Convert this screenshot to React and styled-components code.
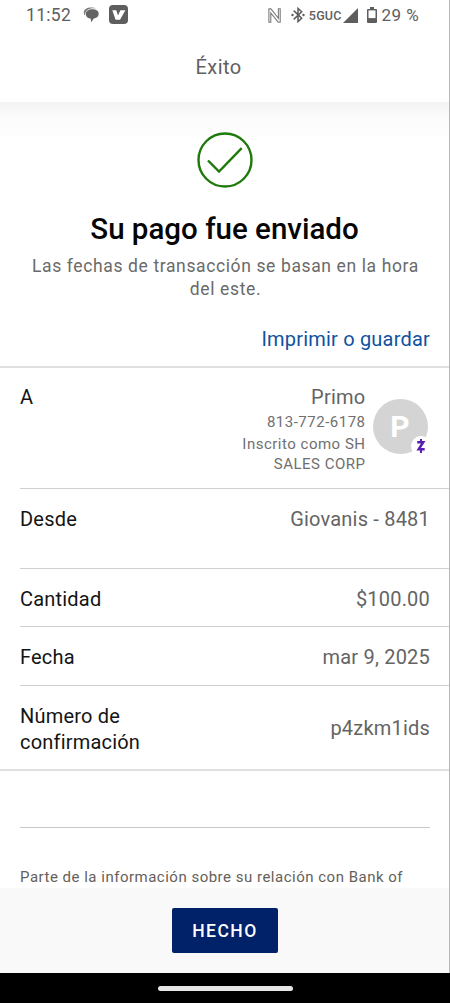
import React from "react";
import styled, { createGlobalStyle } from "styled-components";

const GlobalStyle = createGlobalStyle`
  * {
    box-sizing: border-box;
  }

  body {
    margin: 0;
    background-color: #fff;
    font-family: Roboto, "Liberation Sans", sans-serif;
  }
`;

const rows = [
  { id: "from", label: "Desde", value: "Giovanis - 8481", height: 80 },
  { id: "amount", label: "Cantidad", value: "$100.00", height: 58 },
  { id: "date", label: "Fecha", value: "mar 9, 2025", height: 59 },
];

const ChatIcon = () => (
  <svg width="17" height="16" viewBox="0 0 17 16">
    <path
      d="M9.500 2.300c3.700 0 6.200 1.600 6.200 4.500 0 2.700-1.900 4.500-4.900 4.700L8.300 15.200 7.600 11.600C5 11.300 2.800 9.600 2.800 7.200c0-3.300 2.900-4.900 6.700-4.900z"
      fill="#646464"
    />
    <path d="M2 8.400C.2 6.500.3 3.300 2.800 1.900 5.300.2 10.500.1 13 1.400 8 .9 1.900 2.300 2 8.400z" fill="#7a7a7a" />
  </svg>
);

const VenmoIcon = () => (
  <svg width="19" height="19" viewBox="0 0 19 19">
    <rect width="19" height="19" rx="4" fill="#5e5e5e" />
    <path d="M3.300 5.200h4l1.700 5.200 2.400-5.200h5L11 14.800H6.600z" fill="#fff" />
  </svg>
);

const NfcIcon = () => (
  <svg width="13" height="15" viewBox="0 0 13 15" fill="none" stroke="#7c7c7c" strokeWidth="1.100">
    <path d="M2.800 14.300H.9V.9h2l7.500 9.400V.7h1.800v13.500h-2L2.800 5z" />
  </svg>
);

const BluetoothIcon = () => (
  <svg width="14" height="16" viewBox="0 0 14 16">
    <path
      d="M2.700 3.600l8 7.700L7 14.600V1.400l3.700 3.300-8 7.700"
      fill="none"
      stroke="#5e5e5e"
      strokeWidth="1.500"
    />
    <circle cx="1.500" cy="8" r="1.200" fill="#5e5e5e" />
    <circle cx="12.500" cy="8" r="1.200" fill="#5e5e5e" />
  </svg>
);

const SignalIcon = () => (
  <svg width="15" height="15" viewBox="0 0 15 15">
    <path d="M15 0v15H0z" fill="#5e5e5e" />
  </svg>
);

const BatteryIcon = () => (
  <svg width="10" height="16" viewBox="0 0 10 16">
    <path d="M3 0h4v2h2a1 1 0 0 1 1 1v12a1 1 0 0 1-1 1H1a1 1 0 0 1-1-1V3a1 1 0 0 1 1-1h2z" fill="#5e5e5e" />
    <path d="M1.500 3.400h7v7.700h-7z" fill="#fff" />
  </svg>
);

const CheckIcon = () => (
  <svg width="56" height="56" viewBox="0 0 56 56" fill="none" stroke="#1f7a0c" strokeWidth="2.400">
    <circle cx="28" cy="28" r="26.500" />
    <path d="M11 28.500l11 11L44.700 16.200" />
  </svg>
);

const ZelleIcon = () => (
  <svg width="10" height="16" viewBox="0 0 10 16" fill="none" stroke="#5a1fb0">
    <path d="M1.200 4.300h6L2.700 11.300h6" strokeWidth="2.500" />
    <path d="M5 1v3M5 12v3" strokeWidth="2.100" />
  </svg>
);

const App = () => (
  <Screen>
    <GlobalStyle />
    <Content>
      <StatusBar>
        <Clock>11:52</Clock>
        <ChatIcon />
        <VenmoIcon />
        <StatusRight>
          <NfcIcon />
          <BluetoothIcon />
          <Network>5GUC</Network>
          <SignalIcon />
          <BatteryIcon />
          <Battery>29 %</Battery>
        </StatusRight>
      </StatusBar>
      <Header>Éxito</Header>

      <Hero>
        <CheckIcon />
        <Title>Su pago fue enviado</Title>
        <Subtitle>
          Las fechas de transacción se basan en la hora
          <br />
          del este.
        </Subtitle>
      </Hero>
      <PrintLink href="#">Imprimir o guardar</PrintLink>

      <Details>
        <RecipientRow>
          <Label>A</Label>
          <Recipient>
            <Name>Primo</Name>
            <Phone>813-772-6178</Phone>
            <Small>Inscrito como SH</Small>
            <Small>SALES CORP</Small>
          </Recipient>
          <Avatar>
            P
            <Badge>
              <ZelleIcon />
            </Badge>
          </Avatar>
        </RecipientRow>
        {rows.map((row) => (
          <Row key={row.id} $height={row.height}>
            <Label>{row.label}</Label>
            <Value>{row.value}</Value>
          </Row>
        ))}
        <Row $height={83} $last>
          <Label>
            Número de
            <br />
            confirmación
          </Label>
          <Value $middle>p4zkm1ids</Value>
        </Row>
      </Details>

      <Disclosure>Parte de la información sobre su relación con Bank of</Disclosure>
      <Footer>
        <DoneButton>HECHO</DoneButton>
      </Footer>
    </Content>
    <NavBar>
      <Handle />
    </NavBar>
  </Screen>
);

const Screen = styled.div`
  width: 450px;
  height: 1003px;
  display: flex;
  flex-direction: column;
  overflow: hidden;
  white-space: nowrap;
`;

const Content = styled.main`
  height: 973px;
  display: flex;
  flex-direction: column;
  border-right: 1px solid #b9b9b9;
`;

const StatusBar = styled.div`
  height: 31px;
  padding: 0 30px 1px 26px;
  display: flex;
  align-items: center;
  color: #5e5e5e;

  > svg:nth-of-type(1) {
    margin-left: 12px;
  }

  > svg:nth-of-type(2) {
    margin: -1px 0 0 9px;
  }
`;

const Clock = styled.span`
  width: 45px;
  font-size: 17.5px;
  letter-spacing: 0.3px;
`;

const StatusRight = styled.div`
  margin-left: auto;
  display: flex;
  align-items: center;

  > svg:nth-of-type(2) {
    margin-left: 10px;
  }

  > svg:nth-of-type(4) {
    margin: -1px 0 0 9px;
  }
`;

const Network = styled.span`
  margin: 1px 1px 0 4px;
  font-size: 12.5px;
  font-weight: 500;
  letter-spacing: 0.2px;
`;

const Battery = styled.span`
  margin-left: 5px;
  font-size: 17px;
  letter-spacing: 0.4px;
`;

const Header = styled.header`
  height: 71px;
  padding-right: 12px;
  display: flex;
  justify-content: center;
  align-items: center;
  color: #616161;
  font-size: 20px;
  letter-spacing: 0.4px;
`;

const Hero = styled.section`
  height: 212px;
  padding-top: 30px;
  display: flex;
  flex-direction: column;
  align-items: center;
  background: linear-gradient(#f3f3f3, #fcfcfc 18px, #fff 42px);

  > svg {
    flex-shrink: 0;
  }
`;

const Title = styled.h1`
  margin: 24px 0 0;
  color: #050505;
  font-size: 29.5px;
  font-weight: 500;
  line-height: 34px;
`;

const Subtitle = styled.p`
  margin: 9px 0 0;
  padding-left: 2px;
  color: #6a6a6a;
  font-size: 17.5px;
  line-height: 23px;
  letter-spacing: 0.62px;
  text-align: center;
`;

const PrintLink = styled.a`
  height: 52px;
  padding: 13px 19px 0 0;
  color: #10529f;
  font-size: 20px;
  line-height: 24px;
  letter-spacing: 0.2px;
  text-align: right;
  text-decoration: none;
`;

const Details = styled.section`
  border-top: 2px solid #e0e0e0;
  border-bottom: 2px solid #e0e0e0;
`;

const Row = styled.div`
  height: ${(props) => props.$height}px;
  margin-left: 20px;
  padding: 17px 19px 0 0;
  display: flex;
  justify-content: space-between;
  border-bottom: ${(props) => (props.$last ? "none" : "1px solid #cfcfcf")};
`;

const RecipientRow = styled(Row)`
  height: 121px;
  padding-top: 16px;
  padding-right: 21.5px;
`;

const Label = styled.div`
  color: #141414;
  font-size: 20px;
  line-height: 26px;
  letter-spacing: 0.2px;
`;

const Value = styled.div`
  margin-top: ${(props) => (props.$middle ? 12 : 0)}px;
  color: #646464;
  font-size: 20px;
  line-height: 26px;
  letter-spacing: 0.2px;
`;

const Recipient = styled.div`
  margin: 0 7px 0 auto;
  display: flex;
  flex-direction: column;
  align-items: flex-end;
`;

const Name = styled(Value)`
  letter-spacing: 0.25px;
`;

const Small = styled.div`
  color: #707070;
  font-size: 15px;
  line-height: 20px;
  letter-spacing: 0.5px;
`;

const Phone = styled(Small)`
  padding-top: 1px;
  line-height: 23px;
`;

const Avatar = styled.div`
  position: relative;
  width: 55px;
  height: 55px;
  margin-top: 15px;
  display: flex;
  justify-content: center;
  align-items: center;
  border-radius: 50%;
  background-color: #d4d4d4;
  color: #fff;
  font-size: 30px;
  font-weight: 700;
`;

const Badge = styled.span`
  position: absolute;
  right: -3px;
  bottom: -2px;
  width: 20px;
  height: 20px;
  display: flex;
  justify-content: center;
  align-items: center;
  border-radius: 50%;
  background-color: #fff;
`;

const Disclosure = styled.p`
  height: 61px;
  margin: 56px 19px 0 20px;
  padding-top: 39px;
  border-top: 1px solid #c8c8c8;
  color: #666059;
  font-size: 15px;
  line-height: 20px;
  letter-spacing: 0.5px;
`;

const Footer = styled.footer`
  height: 85px;
  padding-top: 20px;
  display: flex;
  justify-content: center;
  align-items: flex-start;
  background-color: #f9f9f9;
`;

const DoneButton = styled.button`
  width: 106px;
  height: 45px;
  padding: 1px 0 0 1px;
  border: none;
  border-radius: 2px;
  background-color: #012169;
  color: #fff;
  font-family: inherit;
  font-size: 17.5px;
  font-weight: 500;
  letter-spacing: 1.5px;
`;

const NavBar = styled.div`
  height: 30px;
  display: flex;
  justify-content: center;
  align-items: center;
  background-color: #000;
`;

const Handle = styled.div`
  width: 135px;
  height: 5px;
  border-radius: 3px;
  background-color: #e6e6e6;
`;

export default App;
